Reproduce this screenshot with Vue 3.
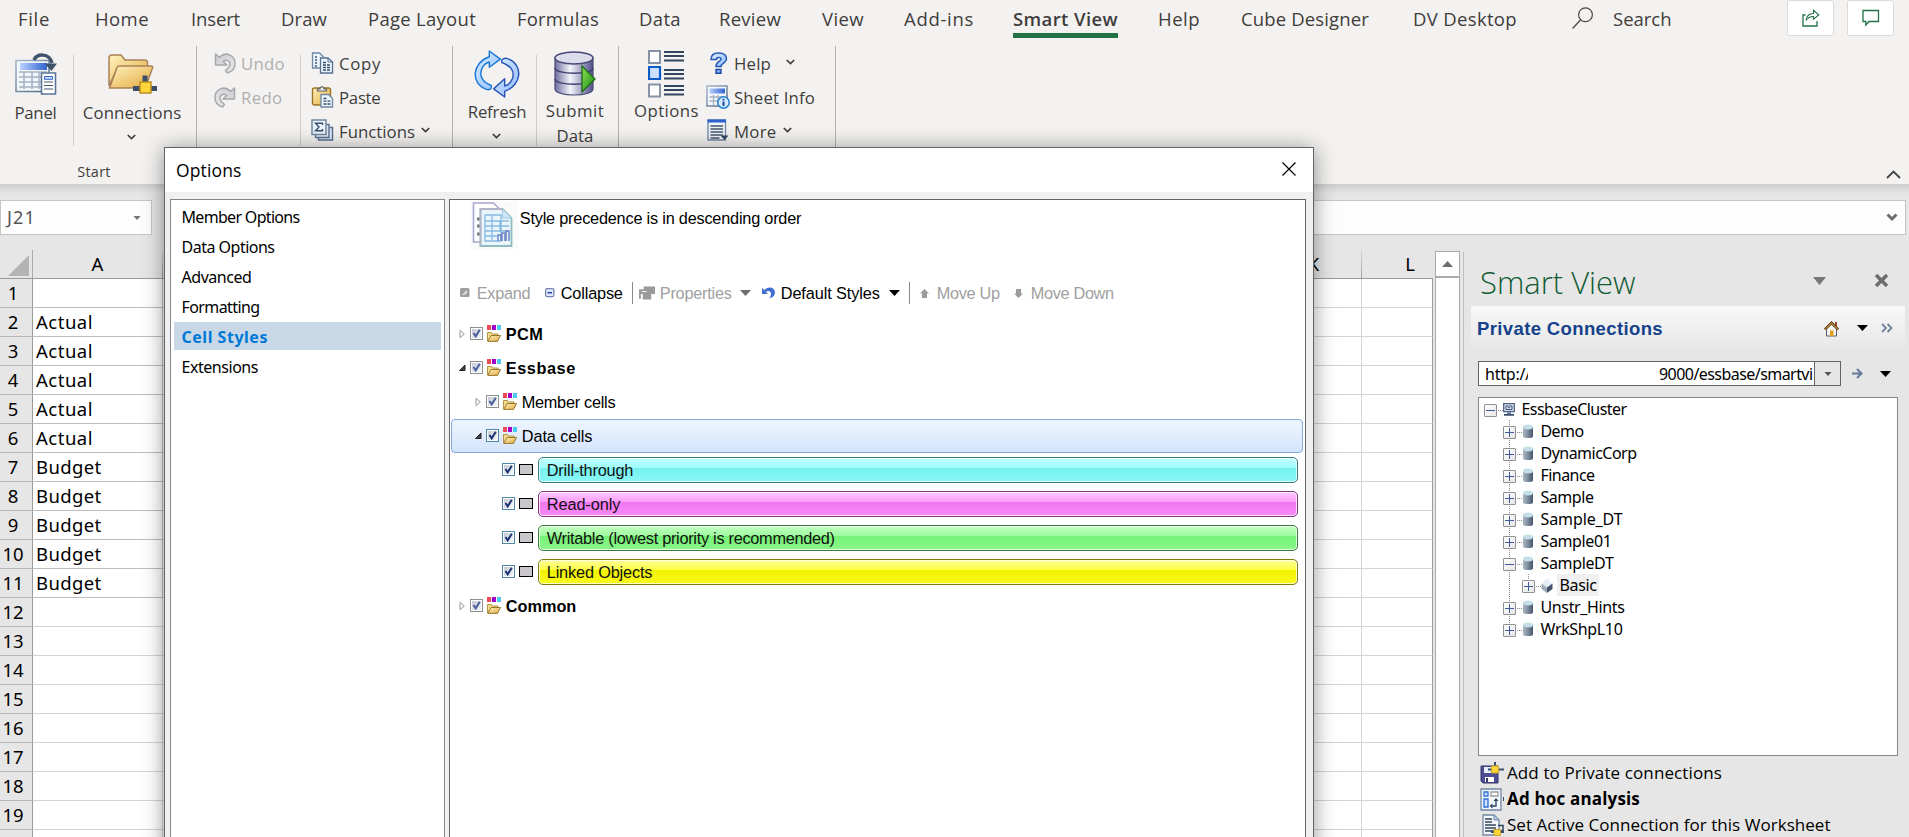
<script setup>
// Tracks a label so that its advance width equals the given number of pixels.
const vFit = {
  mounted(el, { value }) {
    const range = document.createRange()
    range.selectNodeContents(el)
    const natural = range.getBoundingClientRect().width
    el.style.letterSpacing = ((value - natural) / el.textContent.length).toFixed(3) + 'px'
  },
}

const tabs = [
  ['File', 32], ['Home', 54], ['Insert', 49], ['Draw', 46], ['Page Layout', 108], ['Formulas', 82],
  ['Data', 42], ['Review', 62], ['View', 42], ['Add-ins', 70], ['Smart View', 105], ['Help', 42],
  ['Cube Designer', 128], ['DV Desktop', 104],
]

const cellText = ['', 'Actual', 'Actual', 'Actual', 'Actual', 'Actual', 'Budget', 'Budget', 'Budget', 'Budget', 'Budget']
const rows = Array.from({ length: 20 }, (_, i) => ({ n: i + 1, a: cellText[i] || '', used: i < 11 }))

const sections = [
  ['Member Options', 118], ['Data Options', 93], ['Advanced', 70], ['Formatting', 78], ['Cell Styles', 86.5], ['Extensions', 76.5],
]

const styleRows = [
  { label: 'PCM', w: 37.5, level: 0, kind: 'group', state: 'closed', bold: true },
  { label: 'Essbase', w: 70, level: 0, kind: 'group', state: 'open', bold: true },
  { label: 'Member cells', w: 93.5, level: 1, kind: 'group', state: 'closed' },
  { label: 'Data cells', w: 70.5, level: 1, kind: 'group', state: 'open', selected: true },
  { label: 'Drill-through', w: 86.5, level: 2, kind: 'style', tone: 'cyan' },
  { label: 'Read-only', w: 73.5, level: 2, kind: 'style', tone: 'pink' },
  { label: 'Writable (lowest priority is recommended)', w: 288, level: 2, kind: 'style', tone: 'green' },
  { label: 'Linked Objects', w: 105.5, level: 2, kind: 'style', tone: 'yellow' },
  { label: 'Common', w: 70.5, level: 0, kind: 'group', state: 'closed', bold: true },
]

const nodes = [
  { label: 'EssbaseCluster', w: 105, level: 0, icon: 'server', open: true },
  { label: 'Demo', w: 43, level: 1, icon: 'cyl' },
  { label: 'DynamicCorp', w: 96, level: 1, icon: 'cyl' },
  { label: 'Finance', w: 54, level: 1, icon: 'cyl' },
  { label: 'Sample', w: 53, level: 1, icon: 'cyl' },
  { label: 'Sample_DT', w: 82, level: 1, icon: 'cyl' },
  { label: 'Sample01', w: 71, level: 1, icon: 'cyl' },
  { label: 'SampleDT', w: 73, level: 1, icon: 'cyl', open: true },
  { label: 'Basic', w: 37, level: 2, icon: 'cube', current: true },
  { label: 'Unstr_Hints', w: 84, level: 1, icon: 'cyl' },
  { label: 'WrkShpL10', w: 82, level: 1, icon: 'cyl', last: true },
]
</script>

<template>
  <div class="app">
    <svg class="defs" width="0" height="0">
      <defs>
        <linearGradient id="gGold" x1="0" y1="0" x2="1" y2="1"><stop offset="0" stop-color="#fff3c0" /><stop offset="1" stop-color="#e3a93c" /></linearGradient>
        <linearGradient id="gBlue" x1="0" y1="0" x2="1" y2="1"><stop offset="0" stop-color="#d9f0ff" /><stop offset="1" stop-color="#8fb8ff" /></linearGradient>
        <linearGradient id="gDb" x1="0" y1="0" x2="1" y2="0"><stop offset="0" stop-color="#6f6f9f" /><stop offset=".4" stop-color="#f4f4fb" /><stop offset="1" stop-color="#50508a" /></linearGradient>
        <linearGradient id="gGreen" x1="0" y1="0" x2="1" y2="1"><stop offset="0" stop-color="#8fe05a" /><stop offset="1" stop-color="#158a10" /></linearGradient>
        <linearGradient id="gCyl" x1="0" y1="0" x2="1" y2="0"><stop offset="0" stop-color="#a9b6c4" /><stop offset=".35" stop-color="#8d9bab" /><stop offset="1" stop-color="#44566c" /></linearGradient>
        <linearGradient id="gGrey" x1="0" y1="0" x2="1" y2="1"><stop offset="0" stop-color="#cfcfd2" /><stop offset="1" stop-color="#e8e8ea" /></linearGradient>
        <linearGradient id="gFrame" x1="0" y1="0" x2="1" y2="1"><stop offset="0" stop-color="#a9b9cb" /><stop offset="1" stop-color="#4b637f" /></linearGradient>
        <linearGradient id="gHead" x1="0" y1="0" x2="1" y2="0"><stop offset="0" stop-color="#b9d0ff" /><stop offset="1" stop-color="#2f62d0" /></linearGradient>
        <linearGradient id="gChk" x1="0" y1="0" x2="1" y2="1"><stop offset="0" stop-color="#c4cad4" /><stop offset="1" stop-color="#f6f7f9" /></linearGradient>
      </defs>
      <symbol id="chev" viewBox="0 0 9 6"><path d="M.8 1 4.5 4.6 8.200 1" fill="none" stroke="#3f3d3b" stroke-width="1.700" /></symbol>
      <symbol id="tri" viewBox="0 0 11 6"><path d="M0 0h11L5.500 6z" fill="currentColor" /></symbol>
      <symbol id="undo" viewBox="0 0 22 22">
        <path d="M1.500 2v11h11.500l-3.800-3.500c3-2.300 6.800-.8 6.800 2.500 0 2.300-1.500 4.300-4.500 6.500l2 2.500C18.500 19.500 21 15.500 21 11.500 21 3 11.500-1 5.500 5.300z" fill="url(#gGrey)" stroke="#a8a8ac" stroke-width="1.500" stroke-linejoin="round" />
      </symbol>
      <symbol id="folder" viewBox="0 0 14 17">
        <path d="M0 0h4v5H0z" fill="#ee4a55" /><path d="M5 0h4v5H5z" fill="#a400c8" /><path d="M10 0h4v5h-4z" fill="#4ccbf2" />
        <path d="M.5 16V7.500h4l1 1.500h5.500v2" fill="#f6dc8a" stroke="#a98a3a" stroke-width=".9" />
        <path d="M.8 16.400 4 10.500h9.500L10.500 16.400z" fill="url(#gGold)" stroke="#8c6b22" stroke-width=".9" />
      </symbol>
      <symbol id="check" viewBox="0 0 13 13">
        <path d="M2 2h9v9H2z" fill="url(#gChk)" /><path d="M3.500 6 5.700 9.300 9.800 2.800" fill="none" stroke="currentColor" stroke-width="2" />
      </symbol>
      <symbol id="cyl" viewBox="0 0 12 15">
        <path d="M1 3v9.500c0 2 10 2 10 0V3z" fill="url(#gCyl)" /><ellipse cx="6" cy="3" rx="5" ry="2.500" fill="#c5dfe9" />
      </symbol>
      <symbol id="cube" viewBox="0 0 12 15">
        <path d="M6 0 .5 6 6 10l5.500-4z" fill="#e6eefa" /><path d="M.5 5.500V11L6 15V9.500z" fill="#9fa9b8" /><path d="M11.500 5.500V11L6 15V9.500z" fill="#42526b" />
      </symbol>
      <symbol id="server" viewBox="0 0 12 13">
        <path d="M.7.7h10.600v8H.7z" fill="#dfe7f3" stroke="#4f6384" stroke-width="1.300" /><path d="M3 3h6v3.600H3z" fill="#fff" stroke="#2f4a7c" stroke-width="1" /><path d="M4.500 4.800h3" stroke="#2f4a7c" /><path d="M4 9.500h4v1.200H4zM1 11h10v1.800H1z" fill="#3d5070" />
      </symbol>
      <symbol id="doc" viewBox="0 0 22 22">
        <path d="M1 1h7l4 4v11H1z" fill="#eef4fb" stroke="#6f87a3" stroke-width="1.300" />
        <path d="M3.500 5h3M3.500 8h3M3.500 11h3M3.500 14h3" stroke="#3c5473" stroke-width="1.300" stroke-dasharray="2 1" />
        <path d="M9 6h7.500L21 10v11H9z" fill="#eef4fb" stroke="#56708f" stroke-width="1.300" /><path d="M16.500 6v4H21" fill="none" stroke="#56708f" />
        <path d="M11.500 10.500h3M11.500 13h7M11.500 15.500h7M11.500 18h7" stroke="#34506f" stroke-width="1.300" stroke-dasharray="3 1" />
      </symbol>
    </svg>

    <header class="ribbon">
      <div class="tabbar">
        <nav class="tabs">
          <span v-for="t in tabs" :key="t[0]" class="tab" :class="{ active: t[0] === 'Smart View' }"><span v-fit="t[1]">{{ t[0] }}</span></span>
        </nav>
        <svg class="lens" width="22" height="23" viewBox="0 0 22 23"><circle cx="13.500" cy="7.800" r="6.900" fill="none" stroke="#4a4846" stroke-width="1.200" /><path d="M8.500 13 .6 21.500" stroke="#4a4846" stroke-width="1.300" /></svg>
        <span class="search"><span v-fit="58.500">Search</span></span>
        <span class="sq share">
          <svg width="18" height="18" viewBox="0 0 18 18" fill="none" stroke="#217346" stroke-width="1.300"><path d="M3.500 6H1v11h14v-5" /><path d="M4 11.500C4.500 7 7 4.500 11.500 4.500V1.200L16.800 6 11.500 10.200V7.500C8 7.300 5.800 8.800 4 11.500z" stroke-width="1.100" /></svg>
        </span>
        <span class="sq">
          <svg width="18" height="18" viewBox="0 0 18 18" fill="none" stroke="#217346" stroke-width="1.300"><path d="M1 1.500h15.500v11H7L3.800 16v-3.500H1z" /></svg>
        </span>
      </div>

      <div class="groups">
        <section class="group start">
          <div class="tools">
            <div class="big panel">
              <svg width="42" height="44" viewBox="0 0 42 44">
                <path d="M1 8.500h33v31H1z" fill="#f3f7fc" stroke="url(#gFrame)" stroke-width="1.600" />
                <path d="M5 11h27v7H5z" fill="url(#gHead)" />
                <path d="M4 20h28M4 25h28M4 30h28M4 35h28M9 20v17M17 20v17M24 20v17" stroke="#a5b2c2" stroke-width="1.500" />
                <path d="M26.500 21h14v21h-14z" fill="#fff" stroke="#5c7596" stroke-width="1.600" />
                <path d="M29.500 24.500h8v2.800h-8z" fill="#cfe0ff" stroke="#2f62d0" /><path d="M29 30h9M29 33.500h9M29 37h9" stroke="#44566c" stroke-width="1.200" />
                <path d="M19 8C22 1.500 34 .5 37 11" fill="none" stroke="#41536c" stroke-width="3.500" /><path d="M29.500 11.500h12.500L36.500 19z" fill="#41536c" />
              </svg>
              <span class="cap"><span v-fit="42">Panel</span></span>
            </div>
            <i class="sep"></i>
            <div class="big conn">
              <svg width="50" height="44" viewBox="0 0 50 44">
                <path d="M2 34V6c0-2 1-3 3-3h9l4 5h20c2 0 2.500 1 2.500 3v6H10z" fill="url(#gGold)" stroke="#a98158" stroke-width="1.500" />
                <path d="M2.500 36 10 15.500c.5-1.200 1-1.500 2-1.500h32c1.500 0 2 .8 1.500 2L39 34c-.5 1.500-1 2-2.500 2z" fill="url(#gGold)" stroke="#a98158" stroke-width="1.500" />
                <path d="M35.500 23.500h5V30h-5zM26 34h7v5h-7zM44 34h6v5h-6z" fill="#3d4f68" /><path d="M33 30h11v11H33z" fill="#ffd63a" stroke="#b98f1e" stroke-width="1.500" />
              </svg>
              <span class="cap"><span v-fit="98.500">Connections</span></span>
              <svg class="cv" width="9" height="6"><use href="#chev" /></svg>
            </div>
          </div>
          <div class="gname"><span v-fit="33.500">Start</span></div>
        </section>

        <section class="group edit">
          <div class="stack s1 off">
            <div class="item"><svg width="22" height="22"><use href="#undo" /></svg><span v-fit="44">Undo</span></div>
            <div class="item"><svg class="flip" width="22" height="22"><use href="#undo" /></svg><span v-fit="41.500">Redo</span></div>
          </div>
          <i class="sep"></i>
          <div class="stack s2">
            <div class="item"><svg width="22" height="22"><use href="#doc" /></svg><span v-fit="42">Copy</span></div>
            <div class="item">
              <svg width="22" height="22" viewBox="0 0 22 22"><rect x="1" y="2" width="18" height="17" rx="2" fill="url(#gGold)" stroke="#9a7426" stroke-width="1.400" /><path d="M6 5V3h2.500c0-3 4-3 4 0H15v2z" fill="#f2f2f2" stroke="#5c5c5c" stroke-width="1.200" /><path d="M9.500 8.500H17l4 4V21H9.500z" fill="#eef4fb" stroke="#6f87a3" stroke-width="1.300" /><path d="M12 12.500h3M12 15.200h7M12 18h7" stroke="#34506f" stroke-width="1.300" stroke-dasharray="3 1" /></svg>
              <span v-fit="41.500">Paste</span>
            </div>
            <div class="item">
              <svg width="23" height="23" viewBox="0 0 23 23"><path d="M7.500 18.500V21h14V8.500h-3" fill="#dfe8f2" stroke="#56708f" stroke-width="1.400" /><path d="M4.500 15.500v3h13.500V5.500h-3" fill="#dfe8f2" stroke="#56708f" stroke-width="1.400" /><path d="M1 1h14v14.500H1z" fill="#eef4fb" stroke="#6f87a3" stroke-width="1.500" /><path d="M11.500 6V4.200H4.500L8 8l-3.500 3.800h7V10" fill="none" stroke="#34506f" stroke-width="1.400" /></svg>
              <span v-fit="76">Functions</span><svg class="cv" width="9" height="6"><use href="#chev" /></svg>
            </div>
          </div>
        </section>

        <section class="group data">
          <div class="big refresh">
            <svg width="48" height="50" viewBox="0 0 48 50" fill="url(#gBlue)" stroke="#1a78d8" stroke-width="1.500" stroke-linejoin="round">
              <path d="M16 1v6C-2 13-4 35 13 41c3 1 6-.5 5-4-8-3-13-9-10-17 1.500-4 4-6.500 8-7.500v5.500L27.500 9.500z" />
              <path d="M32 49v-6C50 37 52 15 35 9c-3-1-7 .5-6 4 9 3 14 9 11 17-1.500 4-4 6.500-8 7.500V30L20.500 40.500z" stroke="#2c55b8" />
            </svg>
            <span class="cap"><span v-fit="58.500">Refresh</span></span>
            <svg class="cv" width="9" height="6"><use href="#chev" /></svg>
          </div>
          <i class="sep"></i>
          <div class="big submit">
            <svg width="42" height="46" viewBox="0 0 42 46">
              <path d="M1 7v31c0 8 38 8 38 0V7z" fill="url(#gDb)" stroke="#4a4a78" stroke-width="1.200" /><ellipse cx="20" cy="7" rx="19" ry="6" fill="#dcdcec" stroke="#4a4a78" stroke-width="1.500" />
              <path d="M1 17c0 7 38 7 38 0M1 28c0 7 38 7 38 0" fill="none" stroke="#3f3f70" stroke-width="1.300" />
              <path d="M28 15v26l13-13z" fill="url(#gGreen)" stroke="#1a6b14" stroke-width="1.300" />
            </svg>
            <span class="cap"><span v-fit="58.500">Submit</span></span>
            <span class="cap"><span v-fit="37">Data</span></span>
          </div>
        </section>

        <section class="group opts">
          <div class="big options">
            <svg width="36" height="48" viewBox="0 0 36 48">
              <path d="M1 1h11v12H1zM1 34.500h11v12H1z" fill="#fff" stroke="#8593a4" stroke-width="2" /><path d="M1 17h11v12H1z" fill="#cfe0ff" stroke="#0c5cc8" stroke-width="2.200" />
              <path d="M16 2h20M16 6h20M16 10.500h20M16 20h20M16 24h20M16 28.500h20M16 36h20M16 40h20M16 44.500h20" stroke="#33475f" stroke-width="2" />
            </svg>
            <span class="cap"><span v-fit="65">Options</span></span>
          </div>
          <div class="stack s3">
            <div class="item help">
              <svg width="24" height="22" viewBox="0 0 24 22"><path d="M5 7.500C5 2.500 8 1 12.500 1S20.500 2.500 20.500 7c0 4-5.500 4-5.500 7.500h-5c0-5.500 5-4.500 5-7.500 0-2-4.500-2-4.500.5z" fill="url(#gBlue)" stroke="#2557b8" stroke-width="1.500" /><path d="M10 17.500h5v3.800h-5z" fill="#7fb0ff" stroke="#1d4aa0" stroke-width="1.400" /></svg>
              <span v-fit="37">Help</span><svg class="cv" width="9" height="6"><use href="#chev" /></svg>
            </div>
            <div class="item">
              <svg width="24" height="24" viewBox="0 0 24 24"><path d="M1 1h20v20H1z" fill="#f4f7fb" stroke="url(#gFrame)" stroke-width="1.500" /><path d="M3.500 3.500h15.500v5H3.500z" fill="url(#gHead)" /><path d="M3.500 12h14M3.500 16h14M7.500 10v10M12 10v10" stroke="#a5b2c2" stroke-width="1.300" /><circle cx="17.500" cy="17.500" r="5.700" fill="#d4ebff" stroke="#1f7fd0" stroke-width="1.500" /><path d="M17.500 16.500V21M17.500 13.800v1.600" stroke="#1d4aa0" stroke-width="2" /></svg>
              <span v-fit="81">Sheet Info</span>
            </div>
            <div class="item more">
              <svg width="24" height="23" viewBox="0 0 24 23"><path d="M2 1h17.500v20H2z" fill="#eef3f9" stroke="#6f87a3" stroke-width="1.300" /><path d="M1.500.5h18.500v3H1.500z" fill="#2f62d0" /><path d="M4.500 7h12.500M4.500 10h12.500M4.500 13h12.500M4.500 16h12.500M4.500 19h9" stroke="#44566c" stroke-width="1.400" /><path d="M14.500 16.500h8L18.500 21z" fill="#33475f" /></svg>
              <span v-fit="42.500">More</span><svg class="cv" width="9" height="6"><use href="#chev" /></svg>
            </div>
          </div>
        </section>
        <svg class="fold" width="15" height="9" viewBox="0 0 15 9"><path d="M1 8 7.500 1.500 14 8" fill="none" stroke="#444" stroke-width="1.800" /></svg>
      </div>
    </header>

    <div class="fbar">
      <div class="namebox"><span v-fit="29">J21</span><svg width="8" height="4"><use href="#tri" width="8" height="4" /></svg></div>
      <div class="formula"><svg width="12" height="9" viewBox="0 0 12 9"><path d="M1.500 1.500 6 6l4.500-4.500" fill="none" stroke="#6d6d6d" stroke-width="3" /></svg></div>
    </div>

    <main class="work">
      <div class="sheet">
        <div class="hrow">
          <div class="corner"><svg width="21" height="21" viewBox="0 0 21 21"><path d="M21 0v21H0z" fill="#b4b4b4" /></svg></div>
          <div class="hc ca">A</div><div class="hc cf"></div><div class="hc ck">K</div><div class="hc cl">L</div>
        </div>
        <div v-for="r in rows" :key="r.n" class="row" :class="{ used: r.used }">
          <div class="rh">{{ r.n < 20 ? r.n : '' }}</div>
          <div class="c ca"><span v-if="r.a" v-fit="r.a === 'Actual' ? 57 : 65.500">{{ r.a }}</span></div>
          <div class="c cf"></div><div class="c ck"></div><div class="c cl"></div>
        </div>
      </div>
      <div class="vscroll"><div class="up"><svg width="11" height="6" viewBox="0 0 11 6"><path d="M0 6h11L5.500 0z" fill="#6d6d6d" /></svg></div></div>

      <aside class="pane">
        <div class="ptitle">
          <span v-fit="155.500">Smart View</span>
          <svg class="pt" width="13" height="8" viewBox="0 0 13 8"><path d="M0 0h13L6.500 8z" fill="#777" /></svg>
          <svg width="15" height="15" viewBox="0 0 15 15"><path d="M2 2l11 11M13 2 2 13" stroke="#6e6e6e" stroke-width="3.600" /></svg>
        </div>
        <div class="phead">
          <span v-fit="186">Private Connections</span>
          <svg class="home" width="15" height="16" viewBox="0 0 15 16"><path d="M2.500 8v7h10V8L7.500 3z" fill="#f5f5f5" stroke="#5b5a6a" stroke-width="1" /><path d="M11 1h2v5h-2z" fill="#a0402c" /><path d="M.8 8.500 7.500 1.800l6.700 6.700" fill="none" stroke="#5a3a1c" stroke-width="2.400" /><path d="M1.200 8.300 7.500 2l6.300 6.300" fill="none" stroke="#f0b93a" stroke-width="1" /><path d="M6 9.500h3.500V15H6z" fill="#e0a020" /></svg>
          <svg class="t1" width="11" height="6"><use href="#tri" /></svg>
          <svg width="12" height="10" viewBox="0 0 12 10"><path d="M1 1l4 4-4 4M6.500 1l4 4-4 4" fill="none" stroke="#71819c" stroke-width="1.800" /></svg>
        </div>
        <div class="url">
          <div class="field"><span class="u1"><span v-fit="46">http://</span></span><span class="u2"><span v-fit="153.500">9000/essbase/smartvi</span></span></div>
          <div class="drop"><svg width="8" height="4" viewBox="0 0 11 6"><use href="#tri" /></svg></div>
          <svg class="go" width="11" height="11" viewBox="0 0 11 11"><path d="M0 5.500h9M5 1l4.500 4.500L5 10" fill="none" stroke="#66799a" stroke-width="2" /></svg>
          <svg class="t2" width="11" height="6"><use href="#tri" /></svg>
        </div>
        <div class="tree">
          <div v-for="n in nodes" :key="n.label" class="node" :class="['lv' + n.level, { last: n.last }]">
            <i v-if="n.level" class="rail"></i><i v-if="n.level === 2" class="rail inner"></i>
            <i class="pm" :class="{ open: n.open }"></i><i class="dots"></i>
            <svg class="ni" width="12" height="15"><use :href="'#' + n.icon" /></svg>
            <span class="nl" :class="{ current: n.current }"><span v-fit="n.w">{{ n.label }}</span></span>
          </div>
        </div>
        <ul class="acts">
          <li>
            <svg width="24" height="24" viewBox="0 0 24 24"><path d="M1 5h17v17H3l-2-2z" fill="#4e4e94" stroke="#35356e" /><path d="M4 6h12v6H4z" fill="#eceff6" /><path d="M5 16h9v5H5z" fill="#fff" /><path d="M6 17h2v4H6z" fill="#35356e" /><path d="M15 1v5M8 8.500h4M19 8.500h5" stroke="#3d4f68" stroke-width="2" /><path d="M11.500 5h7v7h-7z" fill="#ffd63a" stroke="#c9a22a" /></svg>
            <span v-fit="215">Add to Private connections</span>
          </li>
          <li class="b">
            <svg width="24" height="24" viewBox="0 0 24 24"><path d="M1 2h20v21H1z" fill="#f1f6fc" stroke="#7288a2" stroke-width="1.300" /><path d="M4 5h4v4H4zM4 12h4v8H4z" fill="#cfe3ff" stroke="#2f6fd8" stroke-width="1.300" /><path d="M11 5h7v4h-7z" fill="#fff" stroke="#9a9a9a" stroke-width="1.300" /><path d="M16 12v7h-5" fill="none" stroke="#33475f" stroke-width="1.400" /><path d="M13.500 14 16 11l2.500 3zM12.500 16.500 9.500 19l3 2.500z" fill="#33475f" /><path d="M23.500 10v4" stroke="#33475f" /></svg>
            <span v-fit="133">Ad hoc analysis</span>
          </li>
          <li>
            <svg width="24" height="24" viewBox="0 0 24 24"><path d="M3 2h11l5 5v15H3z" fill="#f4f7fb" stroke="#7288a2" stroke-width="1.300" /><path d="M14 2v5h5z" fill="#b9d0f5" stroke="#7288a2" /><path d="M5 6h7M5 9h7M5 12h11M5 15h11M5 18h7" stroke="#33475f" stroke-width="1.500" /><path d="M18 12.500h5V17" fill="none" stroke="#33475f" stroke-width="1.500" /><path d="M11 18.500h3M20 18.500h4" stroke="#3d4f68" stroke-width="3" /><path d="M14 16.500h6.500v6H14z" fill="#ffd63a" stroke="#c9a22a" /></svg>
            <span v-fit="323.500">Set Active Connection for this Worksheet</span>
          </li>
        </ul>
      </aside>
    </main>

    <div class="dialog">
      <div class="dtitle"><span v-fit="65.500">Options</span><svg width="16" height="16" viewBox="0 0 16 16"><path d="M1.500 1.500l13 13M14.500 1.500l-13 13" stroke="#000" stroke-width="1.200" /></svg></div>
      <div class="dbody">
        <div class="list">
          <div v-for="s in sections" :key="s[0]" class="li" :class="{ sel: s[0] === 'Cell Styles' }"><span v-fit="s[1]">{{ s[0] }}</span></div>
        </div>
        <div class="detail">
          <div class="intro">
            <svg width="48" height="48" viewBox="0 0 48 48">
              <path d="M0 0h48v48H0z" fill="#fafafa" /><path d="M3.500 2h20l5 5v34h-25z" fill="#fff" stroke="#a9a6d0" stroke-width="1.600" /><path d="M7 18h4M7 25h4M7 33h4" stroke="#777" stroke-width="3" />
              <path d="M10.500 8h22l9 9v28h-31z" fill="#eaf5fb" stroke="#8fbcc0" stroke-width="1.800" /><path d="M10.500 45V8h22" fill="none" stroke="#b3b3c8" stroke-width="1.800" /><path d="M32.500 8v9h9z" fill="#cfe8f8" stroke="#9fc6dc" />
              <path d="M15 14h16v26H15zM15 20h24M15 25h24M15 30h24M15 35h12M22 14v26M30 20v10" fill="none" stroke="#86b8e0" stroke-width="1.300" /><path d="M28 40v-6h3v6M32 40V32h3v8M36 40V30h3v10" fill="none" stroke="#6f86c4" stroke-width="1.500" />
            </svg>
            <span v-fit="281.500">Style precedence is in descending order</span>
          </div>
          <div class="bar">
            <svg class="bx" width="10" height="10" viewBox="0 0 10 10"><rect width="9.500" height="9" rx="1.500" fill="#9f9f9f" /><path d="M2 7 7 2v3L4 7z" fill="#e8e8e8" /></svg>
            <span class="b1 off"><span v-fit="53.500">Expand</span></span>
            <svg width="10" height="10" viewBox="0 0 10 10"><rect x=".6" y=".6" width="8.300" height="8" rx="1.500" fill="#e2eafc" stroke="#7181b4" stroke-width="1.200" /><path d="M2.500 4.700h4.500" stroke="#1d3f95" stroke-width="1.500" /></svg>
            <span class="b2"><span v-fit="62">Collapse</span></span>
            <i class="vs"></i>
            <svg class="pr" width="16" height="14" viewBox="0 0 17 14"><path d="M5 0h12v8h-4v6H4V8H2v5H0V3h5z" fill="#9b9b9b" /><path d="M3 5h5v1H3z" fill="#fff" /></svg>
            <span class="b3 off"><span v-fit="72">Properties</span></span>
            <svg class="tg" width="11" height="6"><use href="#tri" /></svg>
            <svg class="df" width="13" height="12" viewBox="0 0 13 12"><path d="M0 1v6h6L4 5c2-2 5-1 5 2 0 2-1 3-2 4 4 0 6-3 6-6C12.500 0 6-1 2.500 3z" fill="#3f6fd0" /></svg>
            <span class="b4"><span v-fit="99">Default Styles</span></span>
            <svg class="tb" width="11" height="6"><use href="#tri" /></svg>
            <i class="vs v2"></i>
            <svg class="mu" width="9" height="9" viewBox="0 0 9 9"><path d="M4.500 0 9 4.500H7V9H2V4.500H0z" fill="#9b9b9b" /></svg>
            <span class="b5 off"><span v-fit="63">Move Up</span></span>
            <svg class="md" width="9" height="9" viewBox="0 0 9 9"><path d="M4.500 9 0 4.500h2V0h5v4.500h2z" fill="#9b9b9b" /></svg>
            <span class="b6 off"><span v-fit="83">Move Down</span></span>
          </div>
          <div class="styles">
            <div v-for="s in styleRows" :key="s.label" class="srow" :class="['d' + s.level, { selected: s.selected, bold: s.bold }]">
              <template v-if="s.kind === 'group'">
                <svg class="ex" width="7" height="10" viewBox="0 0 7 10"><path v-if="s.state === 'closed'" d="M1 1.200v7.600L5.300 5z" fill="#fff" stroke="#9a9a9a" /><path v-else d="M6 2v5.500H.5z" fill="#444" stroke="#222" /></svg>
                <span class="cbx" :class="{ dim: s.bold || s.state === 'closed' }"><svg width="13" height="13"><use href="#check" /></svg></span>
                <svg class="fo" width="14" height="17"><use href="#folder" /></svg>
                <span v-fit="s.w">{{ s.label }}</span>
              </template>
              <template v-else>
                <span class="cbx"><svg width="13" height="13"><use href="#check" /></svg></span>
                <i class="swatch"></i>
                <span class="pill" :class="s.tone"><span v-fit="s.w">{{ s.label }}</span></span>
              </template>
            </div>
          </div>
        </div>
      </div>
    </div>
  </div>
</template>

<style>
html, body { margin: 0; overflow: hidden; background: #e6e6e6; }
</style>

<style scoped>
* { box-sizing: border-box; }
svg { display: block; flex: none; }
span { white-space: pre; }
i { display: block; flex: none; }
.app { position: relative; width: 1909px; height: 837px; overflow: hidden; display: flex; flex-direction: column; background: #e6e6e6; font-family: "Open Sans", "Noto Sans", sans-serif; color: #3f3d3b; }
.defs { position: absolute; }

.ribbon { height: 184px; flex: none; background: #f3f2f1; }
.tabbar { height: 38px; display: flex; }
.tabs { display: grid; grid-template-columns: 77px 96px 90px 87px 149px 122px 80px 103px 82px 109px 145px 83px 172px 151px; padding-left: 18px; font-size: 18.5px; line-height: 37px; height: 38px; flex: none; }
.tab { justify-self: start; height: 38px; }
.tab.active { font-weight: 600; font-size: 18.5px; border-bottom: 5px solid #217346; }
.lens { margin: 7px 0 0 8px; }
.search { margin-left: 19px; width: 174px; font-size: 18.5px; line-height: 37px; }
.sq { width: 47px; height: 36px; background: #fff; border: 1px solid #dddbd9; border-radius: 3px; display: flex; align-items: center; justify-content: center; }
.share { margin-right: 13px; }

.groups { display: flex; height: 146px; font-size: 16.8px; line-height: 24px; }
.group { height: 138px; margin-top: 8px; border-right: 1px solid #b5b3b1; display: flex; }
.start { width: 197px; flex-direction: column; }
.tools { display: flex; flex: none; height: 113px; }
.gname { flex: none; font-size: 14.500px; line-height: 25px; text-align: center; padding-right: 8px; }
.big { display: flex; flex-direction: column; align-items: center; padding-top: 4px; }
.big > svg:first-child { margin: 2px 0 5px; height: 44px; }
.refresh > svg:first-child { margin: 0 0 2px; height: 48px; }
.submit > svg:first-child { margin: 1px 0 2px; height: 46px; }
.options > svg:first-child { margin: 0 2px 1px 0; height: 48px; }
.cap { height: 24px; }
.submit .cap + .cap { margin-top: 1px; }
.big .cv { margin: 9px 1px 0 0; }
.sep { width: 1px; height: 91px; background: #d0cecc; margin-top: 9px; }
.panel { width: 73px; padding-right: 2px; }
.conn { width: 116px; }
.edit { width: 256px; padding-left: 17px; }
.data { width: 166px; padding-left: 5px; }
.opts { width: 217px; padding-left: 5px; }
.refresh { width: 78px; }
.submit { width: 76px; }
.options { width: 85px; margin-right: -3px; }
.stack { display: flex; flex-direction: column; }
.item { display: flex; align-items: center; height: 34px; line-height: 23px; }
.stack .item > svg:first-child { margin-top: -1px; }
.s1 { width: 86px; }
.s1 .item svg { margin-right: 5px; }
.s2 { padding-left: 10px; }
.s2 .item > svg:first-child { margin-right: 5px; width: 23px; }
.s3 .item > svg:first-child { margin-right: 4px; width: 24px; }
.item .cv { margin-left: 6px; margin-top: -3px; }
.help .cv { margin-left: 15px; }
.off { color: #b1afad; }
.flip { transform: scaleX(-1); }
.fold { margin: 132px 8px 0 auto; }

.fbar { height: 66px; flex: none; display: flex; justify-content: space-between; padding: 16px 3px 15px 0; background: linear-gradient(#cdcdcd, #e6e6e6 10px); }
.namebox { width: 152px; border: 1px solid #c6c6c6; background: #fdfdfd; display: flex; align-items: center; justify-content: space-between; padding: 0 10px 0 6px; font: 18px/33px "Noto Sans", sans-serif; color: #555; }
.namebox svg { color: #777; }
.formula { width: 1740px; border: 1px solid #c6c6c6; background: #fdfdfd; display: flex; justify-content: flex-end; align-items: center; padding-right: 7px; }

.work { display: flex; height: 587px; }
.sheet { width: 1433px; flex: none; overflow: hidden; font-family: "Noto Sans", "Open Sans", sans-serif; font-size: 18.500px; color: #000; }
.hrow { display: flex; height: 29px; border-bottom: 1px solid #9b9b9b; line-height: 28px; text-align: center; }
.corner { width: 33px; border-right: 1px solid #ababab; display: flex; justify-content: flex-end; align-items: flex-start; padding: 5px 3px 0 0; }
.hc { border-right: 1px solid; border-image: linear-gradient(#dcdcdc, #9b9b9b) 1; }
.ca { width: 130px; }
.cf { width: 1103px; }
.ck { width: 96px; }
.cl { width: 71px; }
.hc.cl { border: 0; padding-left: 25px; }
.row { display: flex; height: 29px; line-height: 28px; }
.rh { width: 33px; border-right: 1px solid #9b9b9b; border-bottom: 1px solid #b8b8b8; text-align: center; padding-right: 6px; }
.c { background: #fff; border-right: 1px solid #d4d4d4; border-bottom: 1px solid #d4d4d4; }
.used .ca { border-color: #bdbdbd; }
.c.ca { padding-left: 3px; line-height: 28px; }
.c.cl { border-right: 1px solid #9b9b9b; }
.vscroll { width: 25px; margin: 1px 0 0 2px; border: 1px solid #ababab; border-bottom: 0; background: #fff; flex: none; }
.up { height: 26px; border-bottom: 2px solid #ababab; display: flex; align-items: center; justify-content: center; }

.pane { flex: 1; min-width: 0; margin: 2px 0 0 3px; border-left: 1px solid #bfbfbf; padding: 0 4px 0 7px; color: #000; display: flex; flex-direction: column; }
.ptitle { height: 54px; display: flex; align-items: center; font-size: 31px; font-weight: 300; line-height: 54px; color: #125c34; padding: 3px 16px 0 9px; }
.ptitle > span { margin-right: auto; padding-top: 3px; }
.pt { margin-right: 48px; }
.phead { height: 46px; display: flex; align-items: center; background: linear-gradient(#f8f8f8, #e6e6e6); font: 700 18.500px/46px "Liberation Sans", Arial, sans-serif; color: #15428b; padding: 0 12px 0 6px; }
.phead > span { margin-right: auto; }
.home { margin-right: 18px; }
.t1 { color: #000; margin-right: 13px; margin-top: -2px; }
.phead svg:last-child { margin-top: -2px; }
.url { display: flex; align-items: center; height: 25px; margin: 9px 0 11px 7px; font-family: "Noto Sans", sans-serif; font-size: 16px; line-height: 24px; }
.field { width: 337px; height: 25px; border: 1px solid #646464; background: #fff; display: flex; padding-left: 6px; }
.u1 { width: 43px; overflow: hidden; margin-right: 131px; }
.drop { width: 26px; height: 25px; border: 1px solid #646464; border-left: 0; display: flex; align-items: center; justify-content: center; color: #555; }
.go { margin-left: 11px; }
.t2 { margin-left: 17px; color: #000; }
.tree { margin-left: 7px; width: 420px; height: 359px; flex: none; border: 1px solid #828790; background: #fff; font-family: "Noto Sans", sans-serif; font-size: 16px; line-height: 22px; }
.node { position: relative; display: flex; height: 22px; padding-left: 5px; }
.lv1 { padding-left: 24px; }
.lv2 { padding-left: 43px; }
.rail { position: absolute; left: 30px; top: 0; width: 1px; height: 22px; background: repeating-linear-gradient(#8a8a8a 0 1px, transparent 1px 2px); }
.rail.inner { left: 49px; height: 6px; }
.last .rail { height: 8px; }
.pm { position: relative; z-index: 1; width: 13px; height: 13px; margin-top: 6px; border: 1px solid #919191; border-radius: 1px; background: linear-gradient(#3f5a9c, #3f5a9c) 50% 50% / 9px 1px no-repeat, linear-gradient(#3f5a9c, #3f5a9c) 50% 50% / 1px 9px no-repeat, linear-gradient(135deg, #fff, #e6e6e6); }
.pm.open { background: linear-gradient(#3f5a9c, #3f5a9c) 50% 50% / 9px 1px no-repeat, linear-gradient(135deg, #fff, #e6e6e6); }
.dots { width: 5px; height: 1px; margin: 12px 0 0 1px; background: repeating-linear-gradient(90deg, #8a8a8a 0 1px, transparent 1px 2px); }
.ni { margin-top: 4px; }
.lv0 .ni { margin-top: 5px; height: 13px; }
.nl { margin-left: 4px; padding: 0 2px 0 2.500px; height: 22px; }
.nl.current { background: #f0f0f0; }
.acts { list-style: none; margin: 4px 0 0; padding: 0 0 0 9px; font-size: 17px; line-height: 26px; }
.acts li { display: flex; height: 26px; align-items: center; }
.acts svg { margin-right: 3px; }
.acts .b { font-weight: 700; }

.dialog { position: absolute; left: 164px; top: 147px; width: 1150px; height: 720px; border: 1px solid #646464; background: #f0f0f0; box-shadow: 0 2px 20px rgba(0, 0, 0, .42); color: #000; }
.dtitle { height: 44px; background: #fff; display: flex; justify-content: space-between; align-items: flex-start; padding: 0 16px 0 11px; font-size: 17.500px; line-height: 45px; }
.dtitle svg { margin-top: 13px; }
.dbody { display: flex; padding: 7px 7px 0 5px; }
.list { width: 275px; height: 680px; border: 1px solid #828790; background: #fff; font: 16px/30px "Noto Sans", sans-serif; padding: 2px 3px; margin-right: 4px; }
.li { height: 28px; line-height: 30px; margin-bottom: 2px; padding-left: 7.500px; }
.li.sel { background: #c8d8e6; color: #0078d7; font-weight: 700; }
.detail { width: 858px; height: 680px; border: 1px solid #646464; background: #fff; font: 16.300px/24px "Liberation Sans", Arial, sans-serif; padding: 1px 2px 0 1px; }
.intro { display: flex; height: 81px; padding-left: 19px; }
.intro svg { margin-right: 2px; }
.intro span { margin-top: 5px; }
.bar { display: flex; align-items: center; height: 22px; padding-left: 8px; }
.bar .off { color: #a0a0a0; }
.b1 { margin-left: 7px; width: 68px; }
.bx { margin-left: 1px; }
.b2 { margin-left: 6px; width: 71px; }
.vs { width: 1px; height: 22px; background: #8a8a8a; }
.pr { margin-left: 6px; }
.b3 { margin-left: 5px; width: 80px; }
.tg { color: #6d6d6d; }
.df { margin-left: 11px; }
.b4 { margin-left: 6px; width: 108px; }
.v2 { margin-left: 9px; }
.mu { margin-left: 10px; }
.b5 { margin-left: 8px; width: 77px; }
.b6 { margin-left: 8px; }
.styles { margin-top: 13px; }
.srow { display: flex; align-items: center; height: 34px; border: 1px solid transparent; border-radius: 4px; padding-left: 7px; }
.srow.d1 { padding-left: 23px; }
.srow.d2 { padding-left: 50px; }
.srow.selected { border-color: #84aadc; background: linear-gradient(#eef5fe, #d4e5fc); }
.srow.bold { font-weight: 700; }
.ex { margin-right: 4px; }
.cbx { color: #1c3275; border: 1px solid #4f87a8; width: 13px; height: 13px; display: flex; align-items: center; justify-content: center; background: #fff; margin-right: 4px; margin-top: -2px; }
.cbx.dim { border-color: #8e8f8f; color: #4a5f9e; }
.fo { margin-right: 5px; margin-top: -2px; }
.swatch { width: 14px; height: 11px; border: 1px solid #000; background: #c9c7cc; margin-right: 5px; margin-top: -1px; }
.pill { flex: 1; height: 26px; margin-right: 4px; border: 1px solid #3f8080; border-radius: 5px; box-shadow: inset 0 0 0 1px rgba(255, 255, 255, .75); padding-left: 8px; line-height: 24px; color: #111; }
.cyan { background: linear-gradient(#c4ffff, #9dfbfb 40%, #76f1f1 42%, #8af7f7); border-color: #3a7c7c; }
.pink { background: linear-gradient(#ffc9ff, #fb9dfb 40%, #f176f1 42%, #f78af7); border-color: #7c3a7c; }
.green { background: linear-gradient(#c4ffc4, #9dfb9d 40%, #76f176 42%, #8af78a); border-color: #3a7c3a; }
.yellow { background: linear-gradient(#ffff9a, #ffff45 40%, #f1f100 42%, #fafa1e); border-color: #7c7c10; }
</style>
